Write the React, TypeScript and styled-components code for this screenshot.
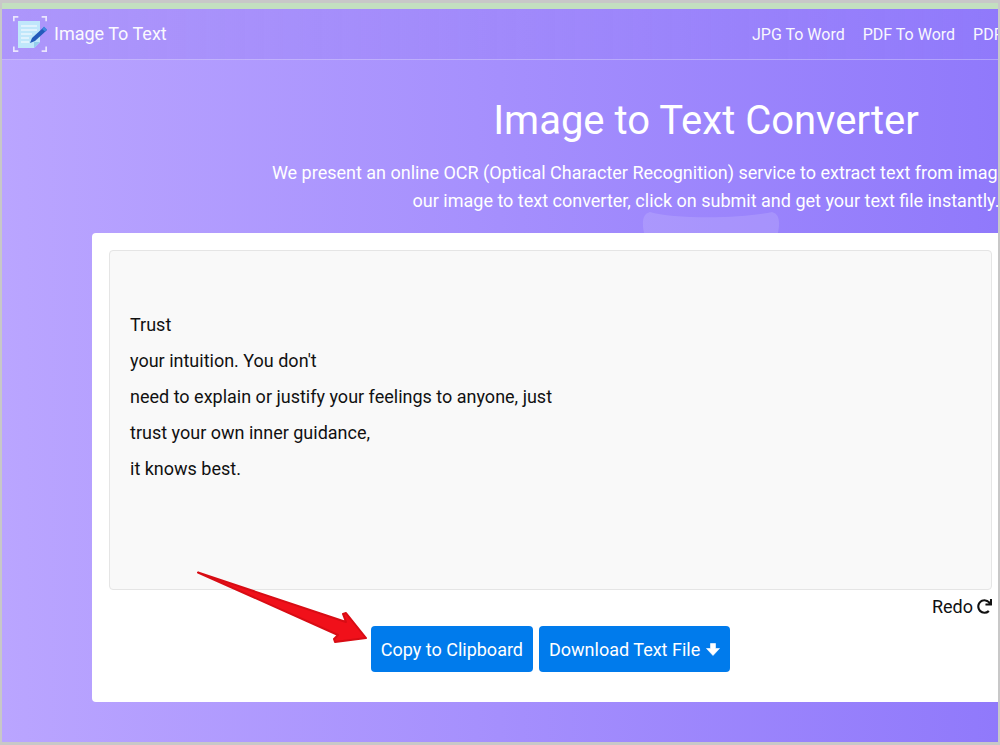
import React from "react";
import styled, { createGlobalStyle } from "styled-components";
import { FaRedo } from "react-icons/fa";

const GlobalStyle = createGlobalStyle`
    html, body {
        margin: 0;
        padding: 0;
        background: #c8c8c8;
    }
    body {
        font-family: Roboto, "Liberation Sans", sans-serif;
    }
`;

const Frame = styled.div`
    position: relative;
    box-sizing: border-box;
    width: 1000px;
    height: 745px;
    padding: 3px 2px 3px 2px;
    overflow: hidden;
    background: #c8c8c8;
`;

const TopStrip = styled.div`
    height: 6px;
    background: #c3dfc0;
`;

const Page = styled.div`
    height: 733px;
    overflow: hidden;
    background: linear-gradient(90deg, #baa5ff 0%, #9079fb 100%);
`;

const Navbar = styled.nav`
    display: flex;
    align-items: center;
    justify-content: space-between;
    box-sizing: border-box;
    width: 1100px;
    height: 51px;
    padding: 0 0 0 11px;
    border-bottom: 1px solid rgba(255, 255, 255, 0.3);
    background: linear-gradient(90deg, rgba(120, 90, 235, 0.2) 0%, rgba(120, 90, 235, 0) 90%);
`;

const Brand = styled.a`
    display: flex;
    align-items: center;
    gap: 7px;
    color: #fff;
    font-size: 18px;
    line-height: 34px;
    opacity: 0.95;
`;

const BrandText = styled.span`
    margin-top: -1px;
`;

const NavLinks = styled.div`
    display: flex;
    gap: 18px;
    width: 350px;
    white-space: nowrap;
`;

const NavLink = styled.a`
    color: #fff;
    font-size: 16px;
    opacity: 0.95;
`;

const Hero = styled.header`
    position: relative;
    box-sizing: border-box;
    width: 1408px;
    height: 173px;
    padding-top: 37px;
    color: #fff;
    text-align: center;
`;

const Title = styled.h1`
    margin: 0 0 14px;
    font-size: 40px;
    font-weight: 400;
    line-height: 48px;
`;

const Lead = styled.p`
    margin: 0;
    font-size: 18px;
    line-height: 28px;
`;

const HeroBlob = styled.svg`
    position: absolute;
    left: 640px;
    bottom: 0;
`;

const Card = styled.main`
    box-sizing: border-box;
    width: 920px;
    height: 469px;
    margin-left: 90px;
    padding: 17px 20px 0 17px;
    border-radius: 4px;
    background: #fff;
`;

const ResultBox = styled.div`
    box-sizing: border-box;
    height: 340px;
    padding: 56px 20px 0;
    border: 1px solid #e5e5e5;
    border-radius: 4px;
    background: #f9f9f9;
`;

const ResultLine = styled.p`
    margin: 0;
    color: #111;
    font-size: 18px;
    line-height: 36px;
`;

const RedoRow = styled.div`
    display: flex;
    align-items: center;
    justify-content: flex-end;
    gap: 4px;
    box-sizing: border-box;
    height: 36px;
    padding-bottom: 3px;
    color: #111;
    font-size: 18px;
`;

const Actions = styled.div`
    display: flex;
    justify-content: center;
    gap: 6px;
`;

const ActionButton = styled.button`
    display: flex;
    align-items: center;
    gap: 6px;
    height: 46px;
    padding: 0 10px;
    border: 0;
    border-radius: 4px;
    background: #007bec;
    color: #fff;
    font-family: inherit;
    font-size: 18px;
`;

const Arrow = styled.svg`
    position: absolute;
    left: 190px;
    top: 565px;
`;

const LogoIcon = () => (
    <svg width="34" height="36" viewBox="0 0 34 36">
        <path d="M0 5V1a1 1 0 0 1 1-1h4M29 0h4a1 1 0 0 1 1 1v4M0 31v4a1 1 0 0 0 1 1h4M29 36h4a1 1 0 0 0 1-1v-4" transform="translate(0.5 0.5) scale(0.97)" fill="none" stroke="#fff" strokeWidth="2.4" opacity="0.8" />
        <path d="M5 5h22v21l-6 6H5z" fill="#c2ecfb" />
        <path d="M27 26l-6 6v-6z" fill="#93d3ec" />
        <path d="M8 10h16M8 14h16M8 18h11M8 22h8M8 26h8" stroke="#eefaff" strokeWidth="1.6" />
        <path d="M31 11l3 3-12 11-5 2 2-5z" fill="#1d57b8" />
        <path d="M29 13l2-2.5 3 3-2 2z" fill="#3b87dd" />
    </svg>
);

const DownArrowIcon = () => (
    <svg width="14" height="13" viewBox="0 0 14 13">
        <path d="M4.5 0.5h5v5h4L7 12.5 0.5 5.5h4z" fill="#fff" stroke="#fff" strokeWidth="0.6" strokeLinejoin="round" />
    </svg>
);

const RedArrow = () => (
    <Arrow width="190" height="90" viewBox="190 565 190 90">
        <path d="M198 572.500L346 622L343 614L346 613L366 638L335 642L334 639L338 635Z" fill="#f0101a" stroke="#d80c14" strokeWidth="2" strokeLinejoin="round" />
    </Arrow>
);

const resultLines = [
    "Trust",
    "your intuition. You don't",
    "need to explain or justify your feelings to anyone, just",
    "trust your own inner guidance,",
    "it knows best.",
];

const App: React.FC = () => {
    return (
        <Frame>
            <GlobalStyle />
            <TopStrip />
            <Page>
                <Navbar>
                    <Brand>
                        <LogoIcon />
                        <BrandText>Image To Text</BrandText>
                    </Brand>
                    <NavLinks>
                        <NavLink>JPG To Word</NavLink>
                        <NavLink>PDF To Word</NavLink>
                        <NavLink>PDF To Excel</NavLink>
                    </NavLinks>
                </Navbar>
                <Hero>
                    <Title>Image to Text Converter</Title>
                    <Lead>
                        We present an online OCR (Optical Character Recognition) service to extract text from images. Upload files to
                        <br />
                        our image to text converter, click on submit and get your text file instantly.
                    </Lead>
                    <HeroBlob width="138" height="22" viewBox="0 0 138 22">
                        <path d="M2 22C0 12 0 3 8 1C30 8 100 8 130 1C138 3 138 12 136 22Z" fill="rgba(255,255,255,0.13)" />
                    </HeroBlob>
                </Hero>
                <Card>
                    <ResultBox>
                        {resultLines.map((line) => (
                            <ResultLine key={line}>{line}</ResultLine>
                        ))}
                    </ResultBox>
                    <RedoRow>
                        Redo
                        <FaRedo size={15} />
                    </RedoRow>
                    <Actions>
                        <ActionButton>Copy to Clipboard</ActionButton>
                        <ActionButton>
                            Download Text File
                            <DownArrowIcon />
                        </ActionButton>
                    </Actions>
                </Card>
            </Page>
            <RedArrow />
        </Frame>
    );
};

export default App;
